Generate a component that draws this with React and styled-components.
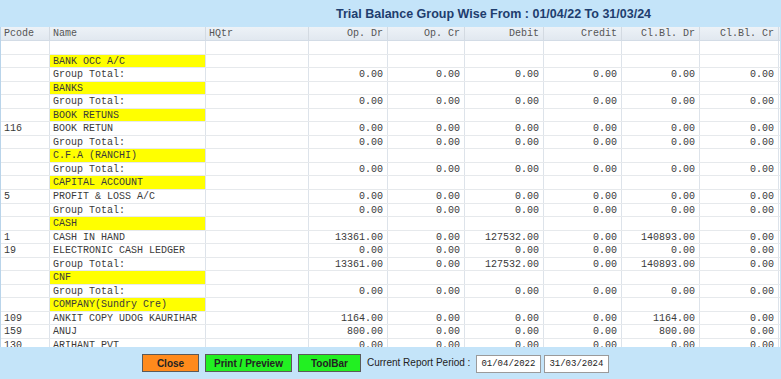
import styled, { createGlobalStyle } from 'styled-components'

const GlobalStyle = createGlobalStyle`
  html, body {
    margin: 0;
    padding: 0;
    background: #c4e4f9;
    font-family: "Liberation Sans", Arial, sans-serif;
  }
`

const columns = ['Pcode', 'Name', 'HQtr', 'Op. Dr', 'Op. Cr', 'Debit', 'Credit', 'Cl.Bl. Dr', 'Cl.Bl. Cr']
const template = '49px 156px 103px 79px 77px 79px 78px 78px 79px'

const Z = ['0.00', '0.00', '0.00', '0.00', '0.00', '0.00']

const rows = [
  { code: '', name: '', values: null },
  { name: 'BANK OCC A/C', group: true },
  { name: 'Group Total:', values: Z },
  { name: 'BANKS', group: true },
  { name: 'Group Total:', values: Z },
  { name: 'BOOK RETUNS', group: true },
  { code: '116', name: 'BOOK RETUN', values: Z },
  { name: 'Group Total:', values: Z },
  { name: 'C.F.A (RANCHI)', group: true },
  { name: 'Group Total:', values: Z },
  { name: 'CAPITAL ACCOUNT', group: true },
  { code: '5', name: 'PROFIT & LOSS A/C', values: Z },
  { name: 'Group Total:', values: Z },
  { name: 'CASH', group: true },
  { code: '1', name: 'CASH IN HAND', values: ['13361.00', '0.00', '127532.00', '0.00', '140893.00', '0.00'] },
  { code: '19', name: 'ELECTRONIC CASH LEDGER', values: Z },
  { name: 'Group Total:', values: ['13361.00', '0.00', '127532.00', '0.00', '140893.00', '0.00'] },
  { name: 'CNF', group: true },
  { name: 'Group Total:', values: Z },
  { name: 'COMPANY(Sundry Cre)', group: true },
  { code: '109', name: 'ANKIT COPY UDOG KAURIHAR', values: ['1164.00', '0.00', '0.00', '0.00', '1164.00', '0.00'] },
  { code: '159', name: 'ANUJ', values: ['800.00', '0.00', '0.00', '0.00', '800.00', '0.00'] },
  { code: '130', name: 'ARIHANT PVT', values: Z },
  { code: '', name: '', values: Z },
]

const App = () => {
  return (
    <Page>
      <GlobalStyle />
      <TitleBar>
        <Title>Trial Balance Group Wise From : 01/04/22 To 31/03/24</Title>
      </TitleBar>

      {/* report grid */}
      <Grid>
        <HeadRow>
          {columns.map((col, index) => (
            <HeadCell key={col} $right={index > 2}>{col}</HeadCell>
          ))}
        </HeadRow>
        {rows.map((row, index) => (
          <Row key={index}>
            <Cell>{row.code}</Cell>
            <Cell $group={row.group}>{row.name}</Cell>
            <Cell />
            {[0, 1, 2, 3, 4, 5].map((i) => (
              <Cell key={i} $right>{row.values ? row.values[i] : ''}</Cell>
            ))}
          </Row>
        ))}
      </Grid>

      {/* bottom toolbar */}
      <Footer>
        <Button $bg="#ff8a1c" $w={57}>Close</Button>
        <Button $bg="#22f022" $w={87}>Print / Preview</Button>
        <Button $bg="#22f022" $w={63}>ToolBar</Button>
        <PeriodLabel>Current Report Period :</PeriodLabel>
        <Dates>
          <DateBox>01/04/2022</DateBox>
          <DateBox>31/03/2024</DateBox>
        </Dates>
      </Footer>
    </Page>
  )
}

const Page = styled.div`
  width: 781px;
  height: 379px;
  display: flex;
  flex-direction: column;
  overflow: hidden;
  background: #c4e4f9;
`

const TitleBar = styled.div`
  height: 27px;
  display: flex;
  align-items: center;
  padding-left: 336px;
  box-sizing: border-box;
`

const Title = styled.h1`
  margin: 0;
  font-family: "Liberation Sans", Arial, sans-serif;
  font-size: 12.5px;
  font-weight: bold;
  color: #1e3d6e;
  white-space: nowrap;
`

const Grid = styled.div`
  height: 320px;
  overflow: hidden;
  background: #ffffff;
  border-left: 1px solid #b9d4ea;
  width: 779px;
`

const HeadRow = styled.div`
  display: grid;
  grid-template-columns: ${template};
  height: 14px;
  background: linear-gradient(#edf2f7, #e1e8f0);
  border-bottom: 1px solid #d3dce6;
  box-sizing: border-box;
`

const HeadCell = styled.div`
  font-family: "Liberation Mono", "Courier New", monospace;
  font-size: 10px;
  line-height: 13px;
  color: #555;
  padding: 0 4px 0 3px;
  text-align: ${({ $right }) => ($right ? 'right' : 'left')};
  border-right: 1px solid #d3dae2;
  white-space: nowrap;
  overflow: hidden;
`

const Row = styled.div`
  display: grid;
  grid-template-columns: ${template};
  height: 13.55px;
  border-bottom: 1px solid #e6e9ec;
  box-sizing: border-box;
`

const Cell = styled.div`
  font-family: "Liberation Mono", "Courier New", monospace;
  font-size: 10px;
  line-height: 13.5px;
  color: #3a3a3a;
  padding: 0 4px 0 3px;
  text-align: ${({ $right }) => ($right ? 'right' : 'left')};
  background: ${({ $group }) => ($group ? '#ffff00' : 'transparent')};
  border-right: 1px solid #dde3ea;
  white-space: nowrap;
  overflow: hidden;
`

const Footer = styled.div`
  flex: 1;
  display: flex;
  align-items: flex-start;
  padding: 7px 0 0 142px;
  gap: 6px;
  box-sizing: border-box;
`

const Button = styled.button`
  width: ${({ $w }) => $w}px;
  height: 18px;
  padding: 0;
  margin: 0;
  background: ${({ $bg }) => $bg};
  border: 1px solid #5a5a5a;
  font-family: "Liberation Sans", Arial, sans-serif;
  font-size: 10px;
  font-weight: bold;
  color: #222;
  white-space: nowrap;
  cursor: pointer;
`

const PeriodLabel = styled.span`
  font-family: "Liberation Sans", Arial, sans-serif;
  font-size: 10px;
  color: #222;
  line-height: 17px;
  white-space: nowrap;
`

const Dates = styled.div`
  display: flex;
  gap: 3px;
  margin-top: 1px;
`

const DateBox = styled.div`
  width: 65px;
  height: 18px;
  box-sizing: border-box;
  background: #fff;
  border: 1px solid #9a9a9a;
  font-family: "Liberation Mono", "Courier New", monospace;
  font-size: 9px;
  line-height: 16px;
  padding-left: 4px;
  color: #222;
  white-space: nowrap;
`

export default App
